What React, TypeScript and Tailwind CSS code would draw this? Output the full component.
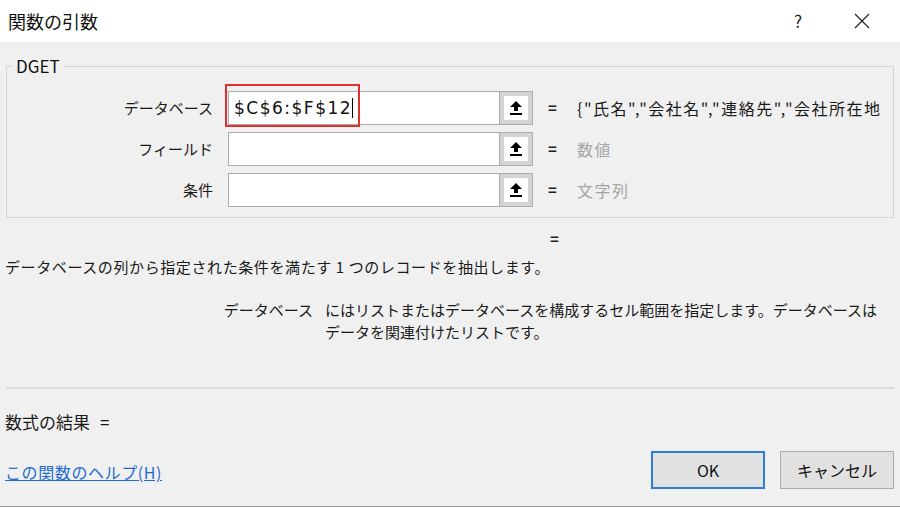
import React from "react";

const FONT = '"Noto Sans CJK JP", "Noto Sans", sans-serif';

function UpIcon() {
  return (
    <svg width="14" height="16" viewBox="0 0 14 16">
      <polygon points="7,1 13,7 9,7 9,11 5,11 5,7 1,7" fill="#000" />
      <rect x="1" y="13" width="12" height="2" fill="#000" />
    </svg>
  );
}

function Row({
  label,
  value,
  valueGray,
  children,
}: {
  label: string;
  value: string;
  valueGray?: boolean;
  children?: React.ReactNode;
}) {
  return (
    <div className="flex items-center h-[34px]">
      <div className="w-[206px] text-right text-[15px] leading-[22px] text-[#1a1a1a]">{label}</div>
      <div className="relative ml-[15px] flex h-[34px]">
        <div className="w-[272px] h-full bg-white border border-[#acacac] flex items-center pl-[5px] text-[#111]">
          {children}
        </div>
        <div className="w-[33px] h-full border border-[#acacac] border-l-0 bg-[#d4d4d4] p-[4px] flex">
          <div className="flex-1 bg-white flex items-center justify-center">
            <UpIcon />
          </div>
        </div>
      </div>
      <div className="ml-[15px] text-[15px] font-bold text-[#222] w-[14px]">=</div>
      <div
        className={
          "ml-[15px] whitespace-nowrap text-[16px] tracking-[1.5px] leading-[24px] " +
          (valueGray ? "text-[#a6a6a6]" : "text-[#1a1a1a]")
        }
      >
        {value}
      </div>
    </div>
  );
}

export default function App() {
  return (
    <div
      className="w-[900px] h-[507px] bg-[#f0f0f0] flex flex-col overflow-hidden border-b border-[#9c9c9c]"
      style={{ fontFamily: FONT }}
    >
      <div className="h-[42px] bg-white flex items-center justify-between pl-[8px] pr-[30px] shrink-0">
        <div className="text-[18px] text-[#111] leading-[22px]">関数の引数</div>
        <div className="flex items-center gap-[52px]">
          <span className="text-[17px] text-[#222]">?</span>
          <svg width="16" height="16" viewBox="0 0 16 16">
            <path d="M1 1 L15 15 M15 1 L1 15" stroke="#222" strokeWidth="1.2" />
          </svg>
        </div>
      </div>

      <div className="flex-1 flex flex-col px-[6px]">
        <fieldset className="mt-[14px] border border-[#d5d5d5] pt-[15px] pb-[10px] flex flex-col gap-[7px]">
          <legend className="ml-[5px] px-[4px] text-[17px] leading-[20px] text-[#111]">DGET</legend>
          <div className="relative">
            <Row label="データベース" value={'{"氏名","会社名","連絡先","会社所在地'}>
              <span
                className="text-[17px] tracking-[1.5px] leading-[22px]"
                style={{ fontFamily: '"DejaVu Sans", sans-serif' }}
              >
                $C$6:$F$12
              </span>
              <span className="w-[1px] h-[20px] bg-black" />
            </Row>
            <div className="absolute left-[218px] top-[-7px] w-[135px] h-[43px] border-2 border-[#e0302b] pointer-events-none" />
          </div>
          <Row label="フィールド" value="数値" valueGray />
          <Row label="条件" value="文字列" valueGray />
        </fieldset>

        <div className="mt-[11px] pl-[544px] text-[15px] leading-[20px] font-bold text-[#222]">=</div>
        <div className="mt-[8px] text-[15px] tracking-[0.6px] leading-[20px] text-[#1a1a1a] -ml-[1px]">
          データベースの列から指定された条件を満たす 1 つのレコードを抽出します。
        </div>

        <div className="mt-[22px] flex text-[15px] leading-[22px] text-[#1a1a1a]">
          <div className="w-[307px] text-right">データベース</div>
          <div className="ml-[12px] w-[565px]">
            にはリストまたはデータベースを構成するセル範囲を指定します。データベースは
            <br />
            データを関連付けたリストです。
          </div>
        </div>

        <div className="mt-[44px] h-[2px] bg-[#dcdcdc]" />

        <div className="mt-[23px] text-[17px] leading-[20px] text-[#1a1a1a] -ml-[1px]">
          数式の結果<span className="ml-[10px]">=</span>
        </div>

        <div className="mt-[19px] flex items-center justify-between">
          <a className="mt-[4px] text-[16px] tracking-[0.6px] leading-[20px] text-[#1e6ccf] underline -ml-[1px]" href="#">
            この関数のヘルプ(H)
          </a>
          <div className="flex gap-[15px]">
            <button className="w-[114px] h-[38px] bg-[#e1e1e1] border-2 border-[#2f7bd8] text-[16px] text-[#111]">
              OK
            </button>
            <button className="w-[114px] h-[38px] bg-[#e1e1e1] border border-[#adadad] text-[16px] text-[#111]">
              キャンセル
            </button>
          </div>
        </div>
      </div>
    </div>
  );
}
